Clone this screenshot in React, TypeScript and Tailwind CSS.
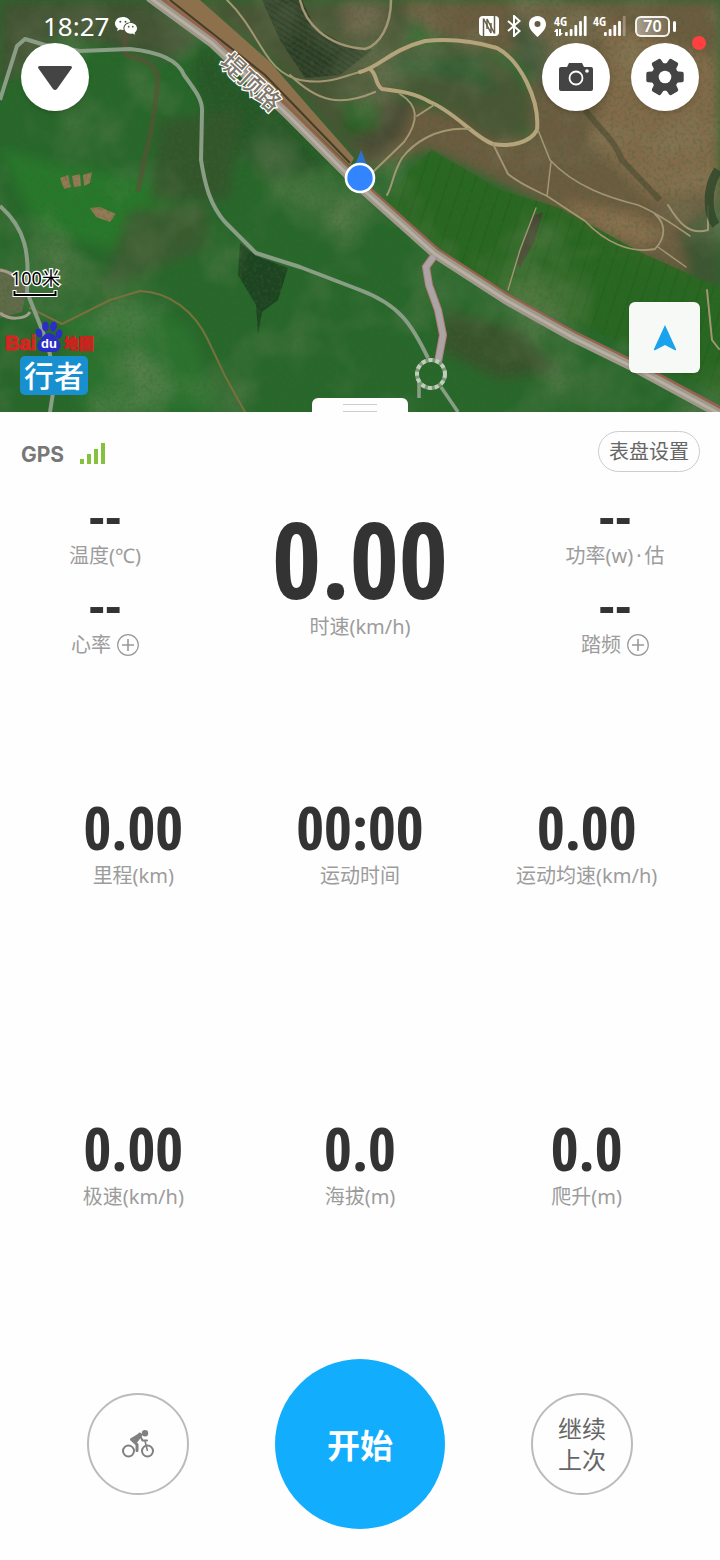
import React from 'react';

const Metric = ({ value, label }: { value: string; label: string }) => (
    <div className="flex flex-col items-center">
        <span className="font-['Open_Sans_Condensed','Roboto_Condensed',sans-serif] text-[60px] font-bold leading-[56px] text-[#333]">{value}</span>
        <span className="mt-[6px] text-[20px] leading-[30px] text-[#9c9c9c]">{label}</span>
    </div>
);

interface SensorProps {
    label: string;
    note?: string;
    addable?: boolean;
}

const Sensor = ({ label, note, addable }: SensorProps) => (
    <div className="flex h-[89px] flex-col items-center">
        <span className="font-['Open_Sans_Condensed','Roboto_Condensed',sans-serif] text-[52px] font-bold leading-[36px] text-[#333]">--</span>
        <div className="mt-2 flex items-center gap-[6px]">
            <span className="flex whitespace-nowrap text-[20px] leading-[30px] text-[#9c9c9c]">
                {label}
                {note && (
                    <>
                        <span className="px-[3px]">·</span>
                        {note}
                    </>
                )}
            </span>
            {addable && (
                <button aria-label={`添加${label}`} className="text-[#999]">
                    <svg width="22" height="22" viewBox="0 0 22 22" fill="none" stroke="currentColor" strokeWidth="1.2">
                        <circle cx="11" cy="11" r="10.3" />
                        <path d="M11 5v12M5 11h12" strokeWidth="1.6" />
                    </svg>
                </button>
            )}
        </div>
    </div>
);

// Satellite layer: terrain, tracks, roads and position marker
const SatelliteMap = () => (
    <svg className="absolute inset-0 h-full w-full" viewBox="0 0 720 412" preserveAspectRatio="xMidYMid slice">
        <defs>
            <filter id="grain" x="0" y="0" width="100%" height="100%">
                <feTurbulence type="fractalNoise" baseFrequency="0.28" numOctaves="3" seed="4" />
                <feColorMatrix values="0 0 0 0 0.05  0 0 0 0 0.12  0 0 0 0 0.04  1.5 0 0 0 -0.66" />
            </filter>
            <filter id="patches" x="0" y="0" width="100%" height="100%">
                <feTurbulence type="fractalNoise" baseFrequency="0.012" numOctaves="4" seed="11" />
                <feColorMatrix values="0 0 0 0 0.27  0 0 0 0 0.29  0 0 0 0 0.16  0 2 0 0 -0.9" />
            </filter>
            <filter id="soft" x="-20%" y="-20%" width="140%" height="140%">
                <feGaussianBlur stdDeviation="6" />
            </filter>
            <pattern id="rows" width="5" height="5" patternUnits="userSpaceOnUse" patternTransform="rotate(32)">
                <rect width="5" height="1.5" fill="#1c351c" />
            </pattern>
            <pattern id="strips" width="13" height="13" patternUnits="userSpaceOnUse" patternTransform="rotate(18)">
                <rect width="1.5" height="13" fill="#1d4f1b" />
            </pattern>
        </defs>
        <rect width="720" height="412" fill="#27682a" />
        <g filter="url(#soft)">
            <path d="M0 0H150L200 40L170 60L60 35L20 70L0 90Z" fill="#3f5133" />
            <path d="M205 45L290 120L330 170L270 180L210 130L190 70Z" fill="#285926" />
            <path d="M0 150L60 165L150 180L190 230L120 250L40 230Z" fill="#26792b" />
            <path d="M130 210L210 205L205 250L100 290Z" fill="#395c2f" />
            <path d="M160 120L240 110L230 200L150 200Z" fill="#33562c" />
            <path d="M60 320L140 300L190 330L220 412H80Z" fill="#2b732e" />
            <path d="M445 310L520 330L560 370L500 380L440 350Z" fill="#38532a" />
            <path d="M195 0H420L400 60L380 160L350 155L270 60Z" fill="#4a5535" />
            <path d="M395 0H720V290L640 258L540 203L430 150L365 170L355 120L390 95L530 140L530 60L430 35Z" fill="#6d5b40" />
            <path d="M600 20L720 60V190L650 200L590 140L610 80Z" fill="#836a49" />
            <path d="M560 200L640 215L665 235L640 250L580 220Z" fill="#876d4b" />
            <path d="M340 0H385V30L345 35Z" fill="#6b6046" />
            <path d="M510 10L550 45L545 90L515 60Z" fill="#435537" />
            <path d="M385 45L470 45L515 70L535 110L520 138L490 140L430 100L375 85Z" fill="#485735" />
            <path d="M395 55L480 55L500 95L460 80L390 75Z" fill="#335c32" />
            <path d="M355 95L415 100L400 140L375 165L355 140Z" fill="#4b4b34" />
            <path d="M340 100H380L378 130L345 135Z" fill="#245d22" />
            <path d="M680 230L720 200V290L690 280Z" fill="#3c5530" />
        </g>
        <path d="M432 150L500 190L560 208L640 252L720 288V396L640 350L500 292L385 205L405 175Z" fill="#28691f" opacity=".85" />
        <path d="M432 150L500 190L560 208L640 252L720 288V396L640 350L500 292L385 205L405 175Z" fill="url(#strips)" opacity=".3" />
        <path d="M262 0H302L315 28L345 45L372 50L340 75L305 78L280 40Z" fill="#34422c" />
        <path d="M262 0H302L315 28L345 45L372 50L340 75L305 78L280 40Z" fill="url(#rows)" opacity=".7" />
        <path d="M240 243L256 256L288 268L278 300L262 312L258 335L256 305L238 275Z" fill="#1c4420" />
        <path d="M533 216L543 212L535 240L520 268L515 262Z" fill="#42442f" />
        <rect width="720" height="412" filter="url(#patches)" opacity=".5" />
        <path d="M60 178l8-3 3 12-7 2zM72 176l8-2 1 12-7 1zM83 175l9-3-2 11-6 3zM90 208l10-1 16 7-6 8-14-5z" fill="#957a56" />
        <path d="M0 268C14 270 22 275 27 288L22 312L0 318Z" fill="#6f6c50" opacity=".8" />
        <rect width="720" height="412" filter="url(#grain)" opacity=".65" />

        {/* Dirt tracks */}
        <g fill="none" stroke="#a39673" strokeLinecap="round" strokeLinejoin="round">
            <path d="M227 0C248 20 258 45 270 60C285 80 305 83 325 81C342 79 350 74 360 72" strokeWidth="2" />
            <path d="M290 75C318 102 340 107 375 92" strokeWidth="2.2" />
            <path d="M300 0C305 22 325 46 365 49C380 45 391 25 391 0" strokeWidth="2.5" />
            <path d="M360 72C380 67 390 50 425 41C455 38 480 43 497 48C520 60 540 100 537 130C530 143 510 147 493 144C475 138 455 112 430 102C415 93 400 91 382 89C374 83 378 75 370 69" strokeWidth="4" stroke="#b5a47b" />
            <path d="M400 94C418 105 420 120 404 142L374 171M434 105L417 116M470 129C435 126 412 145 402 158C392 175 393 185 387 195" strokeWidth="2" />
            <path d="M493 144L508 174C520 184 535 190 547 196L585 221C605 242 630 254 655 249C668 235 664 222 655 214" strokeWidth="1.8" />
            <path d="M538 130L550 160C575 187 610 198 638 205C655 212 670 222 690 236" strokeWidth="1.6" />
            <path d="M551 162L547 196M658 247L686 267" strokeWidth="1.5" />
            <path d="M668 205C680 225 690 235 708 230V206M707 290L712 340L719 349" strokeWidth="2" />
            <path d="M536 208L520 250L508 290" strokeWidth="1.4" />
            <path d="M30 308L62 324L110 300L140 291C170 292 195 312 208 340L225 376L245 412" stroke="#76713d" strokeWidth="2" />
            <path d="M125 30V55C150 60 158 68 158 80C155 105 153 130 146 152L138 190" stroke="#5d5037" strokeWidth="5" opacity=".6" />
        </g>
        <path d="M585 110C600 130 615 140 622 160L660 200" fill="none" stroke="#3a4129" strokeWidth="6" opacity=".45" />
        <path d="M718 170C705 190 708 215 716 225" fill="none" stroke="#2d4628" strokeWidth="9" opacity=".8" />

        {/* Paths */}
        <g fill="none" stroke="#8a9e86" strokeLinejoin="round">
            <path d="M0 100L17 46L25 39L45 45L80 51L130 49C160 52 178 60 184 75C195 90 203 100 202 112L201 160C205 185 210 205 225 222L256 253L300 267L360 290C400 305 412 325 428 358" strokeWidth="4" />
            <path d="M0 206C25 228 30 252 27 292L48 345L55 380L50 412" strokeWidth="4" />
            <path d="M419 382V398M441 387L458 412" strokeWidth="3.5" />
            <path d="M0 270C10 272 14 275 18 280M0 313C8 320 25 320 30 312" strokeWidth="3" stroke="#a69c8c" />
        </g>

        {/* Embankment and main road */}
        <path d="M165 0H200L270 62L310 108L354 158L350 166L270 88Z" fill="#8d704c" />
        <path d="M170 0L265 75L350 163" fill="none" stroke="#453d2a" strokeWidth="2" />
        <path d="M150 -4L213 42L290 115L360 185L436 253L507 299L573 336L640 369L722 413" fill="none" stroke="#96634e" strokeWidth="11" />
        <path d="M149 -3L212 43L289 116L359 186L435 254L506 300L572 337L639 370L720 414" fill="none" stroke="#9f998b" strokeWidth="9" />
        <path d="M149 -3L212 43L289 116L359 186L435 254L506 300L572 337L639 370L720 414" fill="none" stroke="#b7b0a3" strokeWidth="3" />
        <path d="M434 256L426 267L429 285L438 310L443 335L438 362" fill="none" stroke="#b87b75" strokeWidth="8" />
        <path d="M434 256L426 267L429 285L438 310L443 335L438 362" fill="none" stroke="#aaa4a7" strokeWidth="6" />
        <circle cx="431" cy="374" r="14" fill="none" stroke="#7f9a78" strokeWidth="4" />
        <circle cx="431" cy="374" r="14" fill="none" stroke="#c3cdbb" strokeWidth="4" strokeDasharray="4 3" />

        <text
            x="251" y="91" transform="rotate(43 251 82)" textAnchor="middle" fontFamily="Noto Sans CJK SC, sans-serif" fontSize="24"
            fontWeight="500" fill="#81786c" stroke="#fff" strokeWidth="2.4" paintOrder="stroke"
        >
            堤顶路
        </text>

        {/* Current position */}
        <path d="M361 150L369 170H353Z" fill="#2f70cf" />
        <circle cx="360" cy="178" r="14" fill="#3285ff" stroke="#fff" strokeWidth="2.6" />
    </svg>
);

const BaiduLogo = () => (
    <svg width="90" height="32" viewBox="0 0 90 32" aria-label="百度地图">
        <g fontFamily="Liberation Sans, sans-serif" fontWeight="700">
            <text x="0" y="29" fontSize="20" fill="#d92320" stroke="#d92320" strokeWidth="1">Bai</text>
            <text x="59" y="28" fontSize="15" fill="#c9231e" stroke="#c9231e" strokeWidth="1" fontFamily="Noto Sans CJK SC, sans-serif">地图</text>
            <g fill="#2b2ec4">
                <ellipse cx="34" cy="12" rx="3.2" ry="4.6" transform="rotate(-15 34 12)" />
                <ellipse cx="40.5" cy="5.5" rx="3.4" ry="5" />
                <ellipse cx="48.5" cy="5.5" rx="3.4" ry="5" transform="rotate(12 48.5 5.5)" />
                <ellipse cx="54" cy="13" rx="3.2" ry="4.6" transform="rotate(18 54 13)" />
                <path d="M44 12c5 0 6 4 9 7 4 4 3 11-3 12H38c-7-1-7-8-3-12 3-3 4-7 9-7Z" />
            </g>
            <text x="36" y="27" fontSize="13" fill="#fff">du</text>
        </g>
    </svg>
);

const Signal = ({ arrows, bars }: { arrows?: boolean; bars: number }) => (
    <div className="relative h-[22px] w-[33px]">
        <span className="absolute left-0 top-0 font-['Open_Sans_Condensed',sans-serif] text-[13px] font-bold leading-none">4G</span>
        <svg width="33" height="22" viewBox="0 0 33 22" fill="#fff">
            {arrows && <path d="M2 14h2v7H2v-4H0zM5 14h2v4h2l-3 3H5z" />}
            {[0, 1, 2, 3, 4].map((i) => (
                <rect
                    key={i} x={11 + i * 4.7} width="2.8" rx="1"
                    y={[17, 14, 10, 6, 1][i]} height={[4, 7, 11, 15, 20][i]}
                    opacity={i < bars ? 1 : 0.3}
                />
            ))}
        </svg>
    </div>
);

const StatusBar = () => (
    <div className="flex h-[28px] items-center justify-between pl-[43px] pr-[44px] text-white">
        <div className="flex items-center gap-[6px]">
            <span className="font-['Noto_Sans',sans-serif] text-[26px] leading-[28px]">18:27</span>
            <svg width="22" height="18" viewBox="0 0 22 18">
                <path d="M8 0C3.5 0 0 2.8 0 6.5c0 2 1 3.800 2.800 5L2 14l3-1.500c1 .3 2 .4 3 .4l.7 0C7.500 8.500 11 5.200 15.400 5.200 14.800 2.200 11.700 0 8 0Z" fill="#fff" />
                <path d="M22 11.300c0-3-2.900-5.400-6.300-5.400s-6.300 2.400-6.300 5.400 2.900 5.400 6.300 5.400c.8 0 1.500-.1 2.200-.3l2.300 1.300-.6-2c1.500-1 2.400-2.600 2.400-4.400Z" fill="#fff" />
                <g fill="#47603c">
                    <circle cx="5.3" cy="4.8" r="1" />
                    <circle cx="10.5" cy="4.8" r="1" />
                    <circle cx="13.7" cy="9.7" r=".9" />
                    <circle cx="17.8" cy="9.7" r=".9" />
                </g>
            </svg>
        </div>
        <div className="flex items-center">
            <svg className="mr-2" width="20" height="20" viewBox="0 0 20 20" fill="none" stroke="#665f4a" strokeWidth="1.5">
                <rect width="20" height="20" rx="4" fill="#fff" stroke="none" />
                <path d="M4.500 20V2.500L12 17V7" />
                <path d="M15.500 0V17.500L8 3V13" />
            </svg>
            <svg className="mr-2" width="14" height="22" viewBox="0 0 14 22" fill="none" stroke="#fff" strokeWidth="2">
                <path d="M1 6L12.500 16L7 21V1L12.500 6L1 16" />
            </svg>
            <svg className="mr-2" width="17" height="21" viewBox="0 0 17 21">
                <path d="M8.500 0C3.800 0 0 3.600 0 8.200C0 13.500 5 17.500 8.500 21C12 17.500 17 13.500 17 8.200C17 3.600 13.200 0 8.500 0Z" fill="#fff" />
                <circle cx="8.500" cy="8" r="3" fill="#665a41" />
            </svg>
            <div className="mr-[9px] flex gap-[6px]">
                <Signal arrows bars={5} />
                <Signal bars={4} />
            </div>
            <div className="flex items-center gap-[3px]">
                <div className="flex h-[21px] w-[35px] items-center justify-center rounded-[6px] border-2 border-white/90 bg-gradient-to-r from-white/40 to-white/10 font-['Noto_Sans',sans-serif] text-[16px] font-semibold leading-none">
                    70
                </div>
                <div className="h-[11px] w-[3px] rounded-sm bg-white" />
            </div>
        </div>
    </div>
);

const roundButton = 'relative flex h-[68px] w-[68px] items-center justify-center rounded-full bg-white shadow-md';

export default function App() {
    return (
        <div className="flex min-h-screen w-full flex-col bg-[#fefefe] font-['Noto_Sans','Noto_Sans_CJK_SC',sans-serif]">
            <section className="relative flex h-[412px] flex-col overflow-hidden pt-[12px]">
                <SatelliteMap />
                <div className="relative flex flex-1 flex-col">
                    <StatusBar />
                    <div className="mt-[3px] flex gap-[21px] px-[21px]">
                        <button aria-label="收起" className={`${roundButton} mr-auto`}>
                            <svg className="mt-[2px]" width="36" height="26" viewBox="0 0 36 26" fill="#444">
                                <path d="M3 1h30q3 0 1.500 2.500L20 24q-2 2-4 0L1.500 3.500Q0 1 3 1Z" />
                            </svg>
                        </button>
                        <button aria-label="拍照" className={roundButton}>
                            <svg width="34" height="30" viewBox="0 0 34 30">
                                <path d="M2 5H8L10 1H23L25 5H32Q34 5 34 7V27Q34 29 32 29H2Q0 29 0 27V7Q0 5 2 5Z" fill="#444" />
                                <circle cx="17" cy="16" r="6.5" fill="none" stroke="#fff" strokeWidth="1.8" />
                                <circle cx="28" cy="9" r="1.8" fill="#fff" />
                            </svg>
                        </button>
                        <button aria-label="设置" className={roundButton}>
                            <svg width="38" height="38" viewBox="-19 -19 38 38">
                                <g fill="#444">
                                    <circle r="13.5" />
                                    {[30, 90, 150, 210, 270, 330].map((a) => (
                                        <path key={a} d="M-7.5 -10L-5.5 -13L-5.200 -17Q-5 -18.700 -3.500 -18.700H3.500Q5 -18.700 5.200 -17L5.500 -13L7.500 -10Z" transform={`rotate(${a})`} />
                                    ))}
                                </g>
                                <circle r="6.3" fill="#fff" />
                            </svg>
                            <span className="absolute -top-[7px] right-[-7px] h-[14px] w-[14px] rounded-full bg-[#ff4040]" />
                        </button>
                    </div>
                    <div className="mt-auto flex items-end justify-between pb-[17px] pl-[5px] pr-5">
                        <div>
                            <svg className="ml-[6px] block overflow-visible" width="52" height="30" viewBox="0 0 52 30">
                                <text
                                    x="0" y="17" fontFamily="Noto Sans, Noto Sans CJK SC, sans-serif" fontSize="18"
                                    stroke="#fff" strokeWidth="2.5" paintOrder="stroke"
                                >
                                    100米
                                </text>
                                <path d="M3.500 22V29M44.500 22V29M2 27H46" fill="none" stroke="#fff" strokeWidth="4" />
                                <path d="M3.500 23V28M44.500 23V28M3 27H45" fill="none" stroke="#000" strokeWidth="2" />
                            </svg>
                            <div className="mt-[23px]">
                                <BaiduLogo />
                            </div>
                            <div className="ml-[15px] mt-[3px] flex h-[39px] w-[68px] items-center justify-center rounded-[5px] bg-[#1890d0] text-[30px] font-medium leading-none text-white">
                                行者
                            </div>
                        </div>
                        <button aria-label="定位" className="mb-[22px] flex h-[71px] w-[71px] items-center justify-center rounded-[6px] bg-[#f7f9f7] shadow">
                            <svg width="24" height="26" viewBox="0 0 24 26" fill="#19a3ec">
                                <path d="M12 0L23 24Q23.500 26 21.500 25L12 20L2.500 25Q.5 26 1 24Z" />
                            </svg>
                        </button>
                    </div>
                </div>
                <div className="absolute bottom-0 left-1/2 flex h-[14px] w-[96px] -translate-x-1/2 flex-col items-center gap-[6px] rounded-t-[6px] bg-[#fefefe] pt-[6px]">
                    <div className="h-px w-[34px] bg-[#ccc]" />
                    <div className="h-px w-[34px] bg-[#ccc]" />
                </div>
            </section>

            <div className="flex h-[60px] items-end justify-between pl-[21px] pr-5">
                <div className="flex h-[34px] items-center gap-4">
                    <span className="font-['Inter',sans-serif] text-[21px] font-bold leading-[28px] text-[#777]">GPS</span>
                    <svg className="mb-[4px]" width="25" height="21" viewBox="0 0 25 21" fill="#86c13d">
                        <path d="M0 16h4v5H0zM7 11h4v10H7zM14 6h4v15h-4zM21 0h4v21h-4z" />
                    </svg>
                </div>
                <button className="h-[41px] rounded-full border border-[#ccc] px-[10px] text-[20px] font-normal leading-[40px] text-[#666]">表盘设置</button>
            </div>

            <section className="grid h-[212px] grid-cols-[7fr_10fr_7fr] pt-[25px]">
                <div>
                    <Sensor label="温度(℃)" />
                    <Sensor label="心率" addable />
                </div>
                <div className="flex flex-col items-center pt-[13px]">
                    <span className="font-['Open_Sans_Condensed','Roboto_Condensed',sans-serif] text-[106px] font-bold leading-[96px] text-[#333]">0.00</span>
                    <span className="mt-[6px] text-[20px] leading-[30px] text-[#9c9c9c]">时速(km/h)</span>
                </div>
                <div>
                    <Sensor label="功率(w)" note="估" />
                    <Sensor label="踏频" addable />
                </div>
            </section>

            <section className="grid flex-1 grid-cols-3 items-center px-5">
                <Metric value="0.00" label="里程(km)" />
                <Metric value="00:00" label="运动时间" />
                <Metric value="0.00" label="运动均速(km/h)" />
            </section>
            <section className="grid flex-1 grid-cols-3 items-center px-5">
                <Metric value="0.00" label="极速(km/h)" />
                <Metric value="0.0" label="海拔(m)" />
                <Metric value="0.0" label="爬升(m)" />
            </section>

            <footer className="flex items-center justify-center gap-[86px] pb-[31px] pt-[32px]">
                <button aria-label="骑行" className="flex h-[102px] w-[102px] items-center justify-center rounded-full border-2 border-[#bbb]">
                    <svg width="32" height="28" viewBox="0 0 32 28" fill="none" stroke="#808080">
                        <circle cx="6.5" cy="21" r="5.5" strokeWidth="2" />
                        <circle cx="25.5" cy="21" r="5.5" strokeWidth="2" />
                        <circle cx="23" cy="3.2" r="3.2" fill="#808080" stroke="none" />
                        <path d="M17 5L9.500 9.500L15 14.500L15 20.500" strokeWidth="3" strokeLinejoin="round" strokeLinecap="round" />
                        <path d="M18 5L14 10.500" strokeWidth="4.5" strokeLinecap="round" />
                        <path d="M18.500 6.500L20.500 10.500H25" strokeWidth="2" strokeLinecap="round" />
                        <path d="M23 11L25.500 21" strokeWidth="1.5" />
                    </svg>
                </button>
                <button className="h-[170px] w-[170px] rounded-full bg-[#12adfd] pt-1 text-[33px] font-bold text-white">开始</button>
                <button className="h-[102px] w-[102px] rounded-full border-2 border-[#bbb] text-[24px] font-normal leading-[31px] text-[#666]">
                    继续
                    <br />
                    上次
                </button>
            </footer>
        </div>
    );
}
